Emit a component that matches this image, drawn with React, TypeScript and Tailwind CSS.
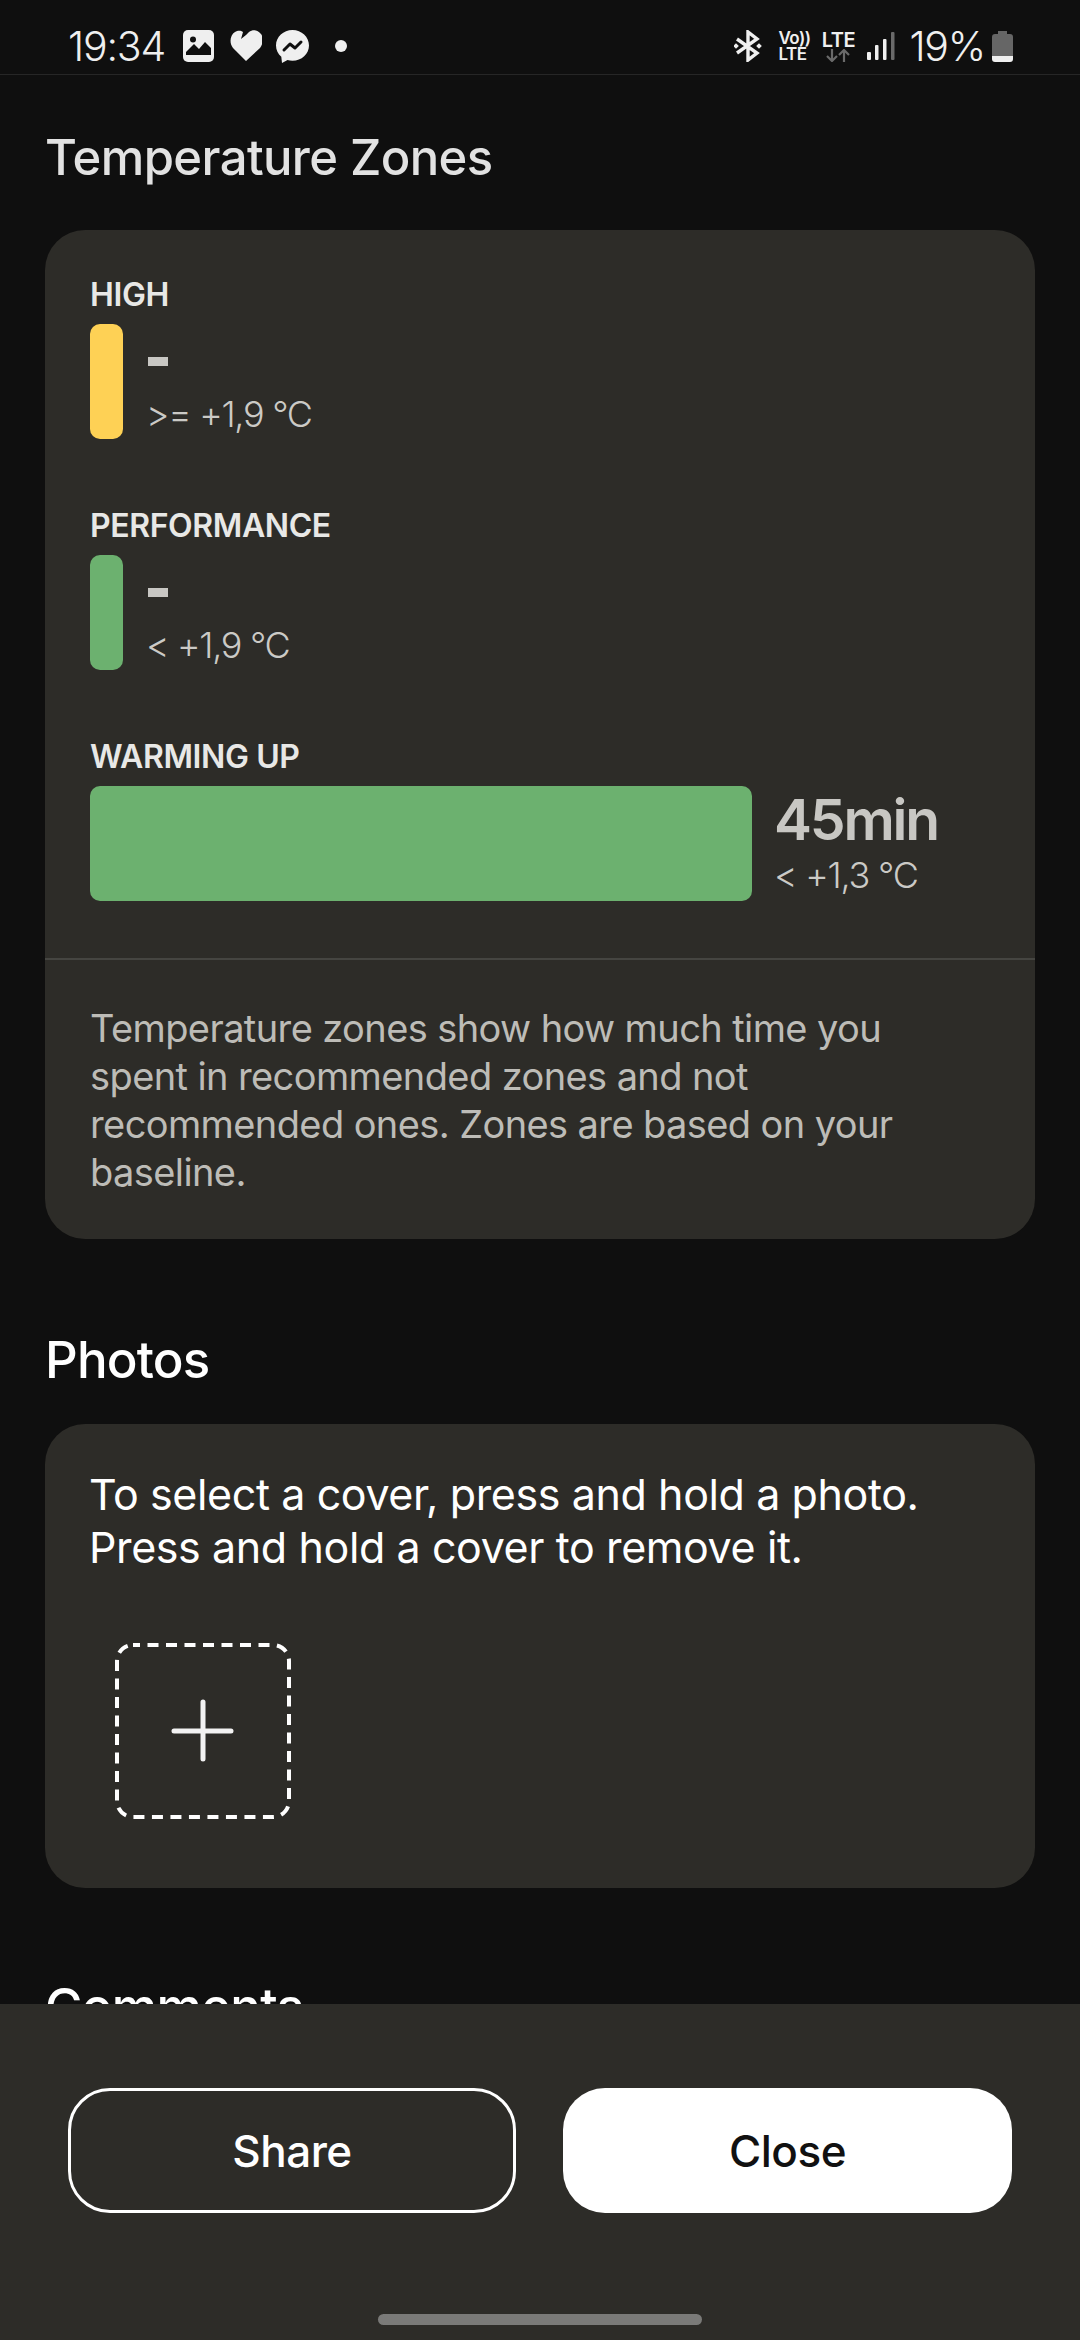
function PhotoIcon() {
  return (
    <svg width="31" height="32" viewBox="0 0 31 32" className="block">
      <path fill="#efefef" d="M5 0h21a5 5 0 0 1 5 5v22a5 5 0 0 1-5 5H5a5 5 0 0 1-5-5V5a5 5 0 0 1 5-5Z" />
      <circle cx="10" cy="9.500" r="3" fill="#0f0f0f" />
      <path fill="#0f0f0f" d="M3 25v-3l8-8 5 5 6-7 6 6v7Z" />
    </svg>
  );
}

function HeartIcon() {
  return (
    <svg width="32" height="32" viewBox="0 0 32 32" className="block">
      <path fill="#efefef" d="M16 31 3 18C-1 13 0 5 5 2c3-2 6-1.500 8 0l-2 7 5-4 3-3c4-3 9-2 12 2 3 4 2 10-1 14Z" />
    </svg>
  );
}

function MessengerIcon() {
  return (
    <svg width="33" height="33" viewBox="0 0 33 33" className="block">
      <path fill="#efefef" d="M16.500 0C7.400 0 0 6.900 0 15.500c0 4.500 2 8.500 5.300 11.300L6 33l5.500-3c1.600.5 3.300.8 5 .8C25.600 30.800 33 24 33 15.500S25.600 0 16.500 0Z" />
      <path fill="none" stroke="#0f0f0f" strokeWidth="3" strokeLinejoin="round" strokeLinecap="round" d="m8 20 6-6 5 4 6-6" />
    </svg>
  );
}

function BluetoothIcon() {
  return (
    <svg width="28" height="32" viewBox="0 0 28 32" className="block">
      <path fill="none" stroke="#efefef" strokeWidth="3.400" d="m3 9 20 14-9 7V2l9 7L3 23" />
      <rect x="0" y="14" width="4" height="4" fill="#efefef" transform="rotate(45 2 16)" />
      <rect x="23" y="14" width="4" height="4" fill="#efefef" transform="rotate(45 25 16)" />
    </svg>
  );
}

function SignalIcon() {
  return (
    <svg width="28" height="30" viewBox="0 0 28 30" className="block">
      <rect x="0" y="21" width="4" height="8" rx="1" fill="#efefef" />
      <rect x="8" y="14" width="3.500" height="15" rx="1" fill="#efefef" />
      <rect x="16" y="8" width="3.500" height="21" rx="1" fill="#efefef" />
      <rect x="24" y="1" width="3.500" height="28" rx="1" fill="#6a6a6a" />
    </svg>
  );
}

function BatteryIcon() {
  return (
    <svg width="21" height="31" viewBox="0 0 21 31" className="block">
      <path fill="#666" d="M6 0h9v3h3a3 3 0 0 1 3 3v19H0V6a3 3 0 0 1 3-3h3Z" />
      <path fill="#efefef" d="M0 25h21v3a3 3 0 0 1-3 3H3a3 3 0 0 1-3-3Z" />
    </svg>
  );
}

function ArrowsIcon() {
  return (
    <svg width="24" height="13" viewBox="0 0 24 13" className="block">
      <path fill="none" stroke="#6a6a6a" strokeWidth="2.200" d="M6 0v12M1 7l5 5 5-5" />
      <path fill="none" stroke="#6a6a6a" strokeWidth="2.200" d="M18 13V1M13 6l5-5 5 5" />
    </svg>
  );
}

function AddTile() {
  return (
    <svg width="176" height="176" viewBox="0 0 176 176" className="block">
      <rect x="2" y="2" width="172" height="172" rx="16" fill="none" stroke="#ffffff" strokeWidth="4" strokeDasharray="11 7.500" strokeDashoffset="4" />
      <path stroke="#f2f2f2" strokeWidth="5" strokeLinecap="round" fill="none" d="M88 59v57M59 88h57" />
    </svg>
  );
}

function StatusBar() {
  return (
    <div className="h-[75px] shrink-0 border-b border-[#262626] flex items-center pl-[68px] pr-[67px] pt-[18px] text-[#efefef]">
      <span className="text-[41px] leading-none font-light tracking-[-1.2px] w-[100px]">19:34</span>
      <div className="ml-[15px]"><PhotoIcon /></div>
      <div className="ml-[16px]"><HeartIcon /></div>
      <div className="ml-[14px]"><MessengerIcon /></div>
      <span className="ml-[26px] w-[12px] h-[12px] rounded-full bg-[#efefef]" />
      <div className="ml-auto flex items-center">
        <BluetoothIcon />
        <div className="ml-[16px] w-[32px] flex flex-col items-start text-[17px] leading-[16px] font-semibold tracking-[-0.5px]">
          <span>Vo))</span>
          <span>LTE</span>
        </div>
        <div className="ml-[11px] w-[34px] flex flex-col items-center text-[20px] leading-[18px] font-semibold tracking-[-0.5px]">
          <span>LTE</span>
          <ArrowsIcon />
        </div>
        <div className="ml-[12px]"><SignalIcon /></div>
        <span className="ml-[14px] text-[41px] leading-none font-light tracking-[-1.2px]">19%</span>
        <div className="ml-[7px]"><BatteryIcon /></div>
      </div>
    </div>
  );
}

function Label({ children }: { children: string }) {
  return <div className="text-[32px] leading-[34px] font-semibold tracking-[-0.4px] text-[#e8e8e6]">{children}</div>;
}

function Zone({ label, color, range }: { label: string; color: string; range: string }) {
  return (
    <div>
      <Label>{label}</Label>
      <div className="mt-[12px] flex items-stretch">
        <div className={`w-[33px] h-[115px] rounded-[10px] ${color}`} />
        <div className="ml-[25px] flex flex-col">
          <span className="mt-[33px] w-[20px] h-[9px] bg-[#c8c7c3]" />
          <span className="-ml-[2px] mt-[28px] text-[36px] leading-[40px] font-light tracking-[-1.3px] text-[#cbcac6]">{range}</span>
        </div>
      </div>
    </div>
  );
}

export default function App() {
  return (
    <div className="[font-family:Inter,'Liberation_Sans',sans-serif] w-[1080px] h-[2340px] bg-[#0f0f0f] flex flex-col overflow-hidden">
      <StatusBar />
      <main className="flex-1 min-h-0 overflow-hidden px-[45px]">
        <h2 className="mt-[55px] text-[49px] leading-[56px] font-medium tracking-[-0.6px] text-[#e2e2e2]">Temperature Zones</h2>
        <section className="mt-[44px] h-[1009px] rounded-[40px] bg-[#2d2c28] flex flex-col">
          <div className="pt-[48px] px-[45px] flex flex-col gap-[70px]">
            <Zone label="HIGH" color="bg-[#fed155]" range=">= +1,9 °C" />
            <Zone label="PERFORMANCE" color="bg-[#6cb16f]" range="< +1,9 °C" />
            <div>
              <Label>WARMING UP</Label>
              <div className="mt-[12px] flex items-center">
                <div className="w-[662px] h-[115px] rounded-[10px] bg-[#6cb16f]" />
                <div className="ml-[22px] flex flex-col">
                  <span className="text-[57px] leading-[54px] font-semibold tracking-[-2.2px] text-[#c8c7c3]">45min</span>
                  <span className="mt-[8px] text-[36px] leading-[40px] font-light tracking-[-1.2px] text-[#cbcac6]">&lt; +1,3 °C</span>
                </div>
              </div>
            </div>
          </div>
          <div className="mt-[57px] h-[2px] bg-[#454541]" />
          <p className="pt-[44px] pl-[45px] pr-[125px] text-[38px] leading-[48px] font-normal tracking-[-0.6px] text-[#bdbcb7]">
            Temperature zones show how much time you spent in recommended zones and not recommended ones. Zones are based on your baseline.
          </p>
        </section>
        <h2 className="mt-[93px] text-[51px] leading-[56px] font-medium tracking-[-0.8px] text-white">Photos</h2>
        <section className="mt-[36px] h-[464px] rounded-[40px] bg-[#2d2c28] px-[45px] pt-[44px]">
          <p className="-ml-[1px] text-[43px] leading-[53px] font-normal tracking-[-0.4px] text-white">
            To select a cover, press and hold a photo.
            <br />
            Press and hold a cover to remove it.
          </p>
          <div className="mt-[69px] ml-[25px] w-[176px]">
            <AddTile />
          </div>
        </section>
        <h2 className="mt-[91px] text-[51px] leading-[56px] font-medium tracking-[-0.7px] text-white">Comments</h2>
      </main>
      <footer className="h-[336px] shrink-0 bg-[#2d2c28] pl-[68px] pr-[68px] pt-[84px]">
        <div className="flex gap-[47px]">
          <button className="w-[448px] h-[125px] rounded-[42px] border-[3px] border-white text-[44px] font-medium tracking-[-0.5px] text-white">Share</button>
          <button className="w-[449px] h-[125px] rounded-[42px] bg-white text-[44px] font-medium tracking-[-0.5px] text-[#111]">Close</button>
        </div>
        <div className="mt-[101px] mx-auto w-[324px] h-[11px] rounded-full bg-[#7a7a78]" />
      </footer>
    </div>
  );
}
